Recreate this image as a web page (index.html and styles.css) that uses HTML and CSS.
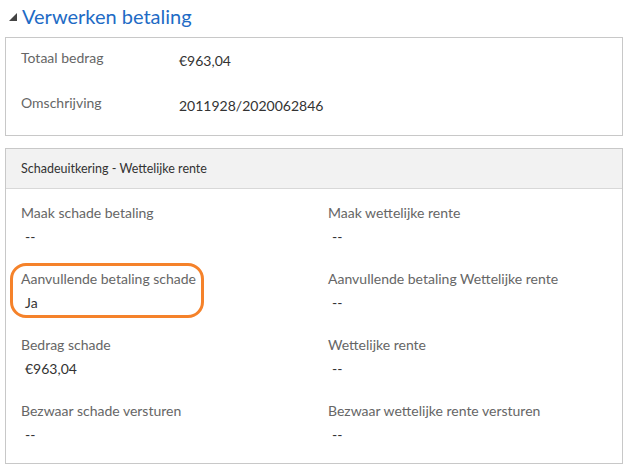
FILE: index.html
```html
<!DOCTYPE html>
<html lang="nl">
<head>
    <title>Verwerken betaling</title>
    <link rel="stylesheet" href="styles.css">
</head>
<body>
<div class="title">
    <svg class="toggle" width="8" height="8" viewBox="0 0 8 8"><polygon points="8,0 8,8 0,8" fill="#444"/></svg>
    <h1>Verwerken betaling</h1>
</div>

<div class="panel summary">
    <div class="line"><span class="key">Totaal bedrag</span><span class="val">€963,04</span></div>
    <div class="line"><span class="key">Omschrijving</span><span class="val">2011928/2020062846</span></div>
</div>

<div class="panel details">
    <div class="panel-head">Schadeuitkering - Wettelijke rente</div>
    <div class="fields">
        <div class="field"><div class="label">Maak schade betaling</div><div class="value">--</div></div>
        <div class="field"><div class="label">Maak wettelijke rente</div><div class="value">--</div></div>
        <div class="field">
            <span class="mark"></span>
            <div class="label">Aanvullende betaling schade</div><div class="value">Ja</div>
        </div>
        <div class="field"><div class="label">Aanvullende betaling Wettelijke rente</div><div class="value">--</div></div>
        <div class="field"><div class="label">Bedrag schade</div><div class="value">€963,04</div></div>
        <div class="field"><div class="label">Wettelijke rente</div><div class="value">--</div></div>
        <div class="field"><div class="label">Bezwaar schade versturen</div><div class="value">--</div></div>
        <div class="field"><div class="label">Bezwaar wettelijke rente versturen</div><div class="value">--</div></div>
    </div>
</div>
</body>
</html>
```

FILE: styles.css
```css
body {
    margin: 0;
    background: white;
    font-family: Lato, "Open Sans", sans-serif;
    font-size: 14px;
    color: #333;
}
.title {
    display: flex;
    align-items: center;
    height: 37px;
    padding-left: 9px;
    box-sizing: border-box;
    padding-bottom: 6px;
}
.toggle {
    margin-right: 5px;
    margin-top: 2px;
}
h1 {
    margin: 0;
    font-size: 20px;
    font-weight: normal;
    color: #1e6bc5;
}
.panel {
    margin-left: 5px;
    width: 618px;
    box-sizing: border-box;
    border: 1px solid #c8c8c8;
}
.summary {
    height: 99px;
    padding: 10px 0 0 15px;
}
.line {
    display: flex;
    height: 45px;
    line-height: 20px;
}
.key {
    width: 158px;
    color: #666;
}
.val {
    color: #333;
    padding-top: 3px;
}
.details {
    margin-top: 12px;
    height: 316px;
}
.panel-head {
    height: 40px;
    box-sizing: border-box;
    background: #f2f2f2;
    border-bottom: 1px solid #d8d8d8;
    padding-left: 15px;
    line-height: 39px;
    font-size: 12.5px;
    color: #333;
}
.fields {
    display: grid;
    grid-template-columns: 307px 1fr;
    padding: 14px 0 0 15px;
}
.field {
    position: relative;
    height: 66px;
}
.label {
    line-height: 20px;
    color: #666;
}
.value {
    line-height: 20px;
    margin-top: 4px;
    padding-left: 4px;
    color: #333;
}
.mark {
    position: absolute;
    left: -11px;
    top: -6px;
    width: 194px;
    height: 55px;
    box-sizing: border-box;
    border: 3px solid #f5822a;
    border-radius: 16px;
}
```
